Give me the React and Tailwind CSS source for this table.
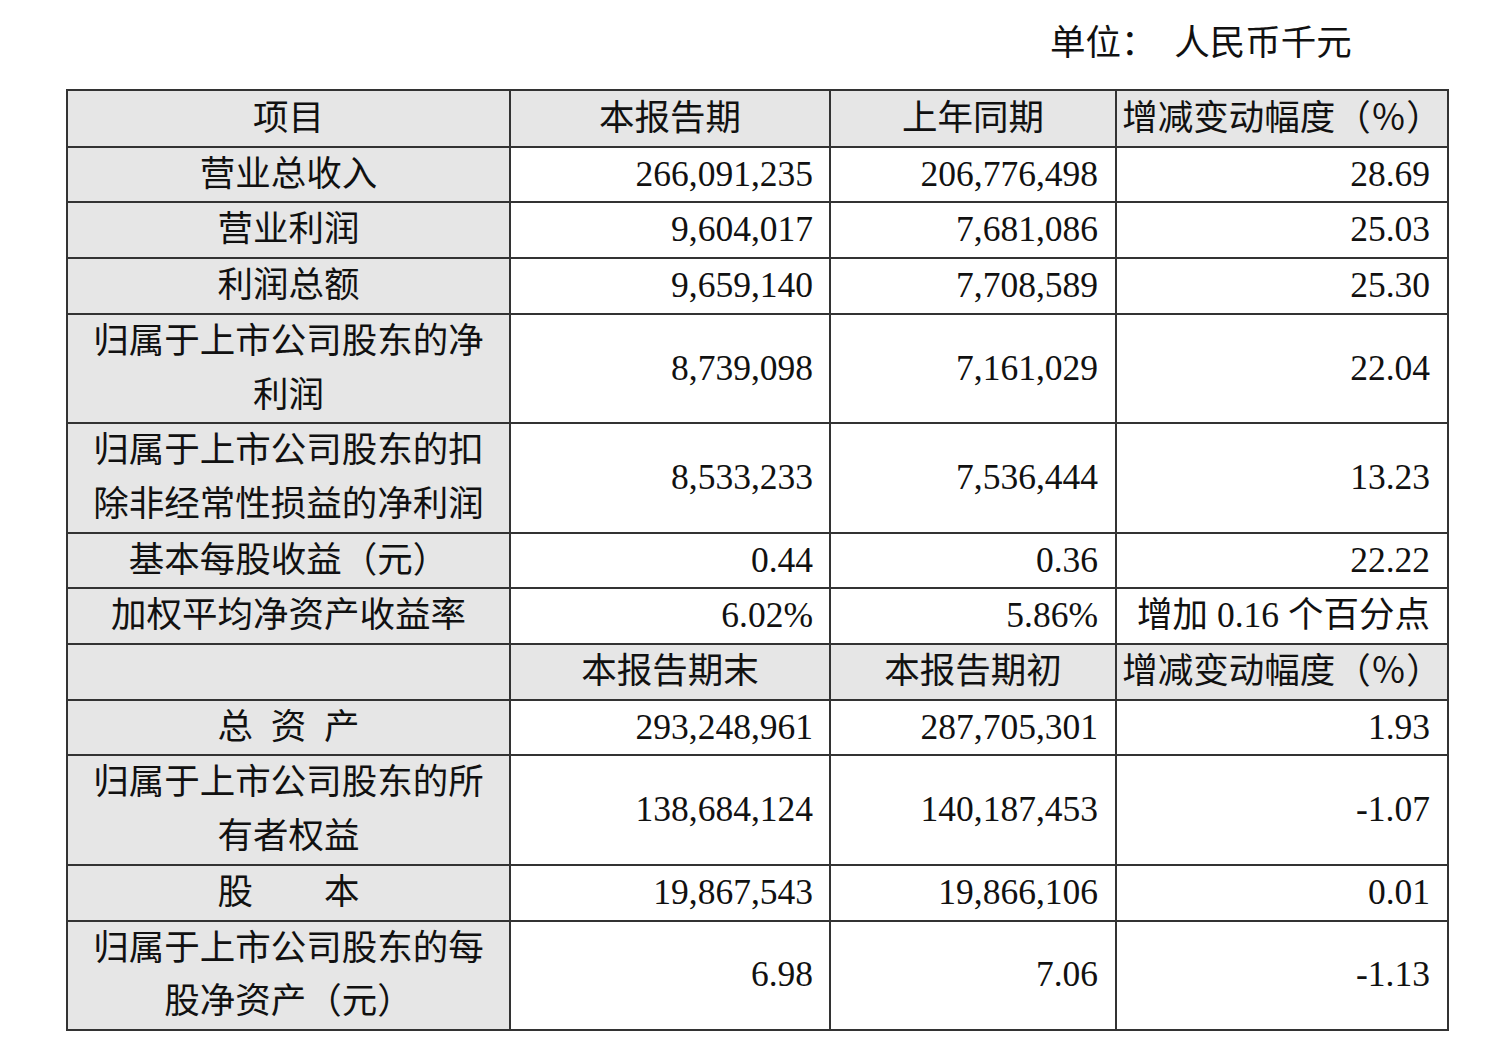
const rowsA = [
  { label: ['营业总收入'], a: '266,091,235', b: '206,776,498', c: '28.69' },
  { label: ['营业利润'], a: '9,604,017', b: '7,681,086', c: '25.03' },
  { label: ['利润总额'], a: '9,659,140', b: '7,708,589', c: '25.30' },
  { label: ['归属于上市公司股东的净', '利润'], a: '8,739,098', b: '7,161,029', c: '22.04' },
  { label: ['归属于上市公司股东的扣', '除非经常性损益的净利润'], a: '8,533,233', b: '7,536,444', c: '13.23' },
  { label: ['基本每股收益（元）'], a: '0.44', b: '0.36', c: '22.22' },
  { label: ['加权平均净资产收益率'], a: '6.02%', b: '5.86%', c: '增加 0.16 个百分点' },
];

const rowsB = [
  { label: ['总  资  产'], a: '293,248,961', b: '287,705,301', c: '1.93' },
  { label: ['归属于上市公司股东的所', '有者权益'], a: '138,684,124', b: '140,187,453', c: '-1.07' },
  { label: ['股        本'], a: '19,867,543', b: '19,866,106', c: '0.01' },
  { label: ['归属于上市公司股东的每', '股净资产（元）'], a: '6.98', b: '7.06', c: '-1.13' },
];

const cell = 'border-2 border-[#333] p-0 align-middle';

const Row = ({ r }) => (
  <tr>
    <td className={`${cell} bg-[#e6e6e6] text-center whitespace-pre`}>
      {r.label.map((l, i) => (
        <div key={i}>{l}</div>
      ))}
    </td>
    <td className={`${cell} text-right pr-[16px]`}>{r.a}</td>
    <td className={`${cell} text-right pr-[17px]`}>{r.b}</td>
    <td className={`${cell} text-right pr-[17px]`}>{r.c}</td>
  </tr>
);

const App = () => {
  return (
    <div
      className="w-[1512px] h-[1040px] bg-white text-[#111] text-[35.5px] leading-[53.7px]"
      style={{ fontFamily: '"Liberation Serif", "Noto Sans CJK SC", serif' }}
    >
      <div className="h-[89px] pl-[1050px] pt-[15px] leading-[56px]">
        单位：&nbsp;&nbsp;人民币千元
      </div>
      <table className="ml-[66px] border-collapse table-fixed w-[1383px]">
        <colgroup>
          <col className="w-[443px]" />
          <col className="w-[320px]" />
          <col className="w-[286px]" />
          <col className="w-[332px]" />
        </colgroup>
        <tbody>
          <tr className="bg-[#e6e6e6]">
            <td className={`${cell} text-center pt-[1px]`}>项目</td>
            <td className={`${cell} text-center pt-[1px]`}>本报告期</td>
            <td className={`${cell} text-center pt-[1px]`}>上年同期</td>
            <td className={`${cell} text-center pt-[1px]`}>增减变动幅度（％）</td>
          </tr>
          {rowsA.map((r, i) => (
            <Row key={i} r={r} />
          ))}
          <tr className="bg-[#e6e6e6]">
            <td className={cell}></td>
            <td className={`${cell} text-center`}>本报告期末</td>
            <td className={`${cell} text-center`}>本报告期初</td>
            <td className={`${cell} text-center`}>增减变动幅度（％）</td>
          </tr>
          {rowsB.map((r, i) => (
            <Row key={i} r={r} />
          ))}
        </tbody>
      </table>
    </div>
  );
};

export default App;
